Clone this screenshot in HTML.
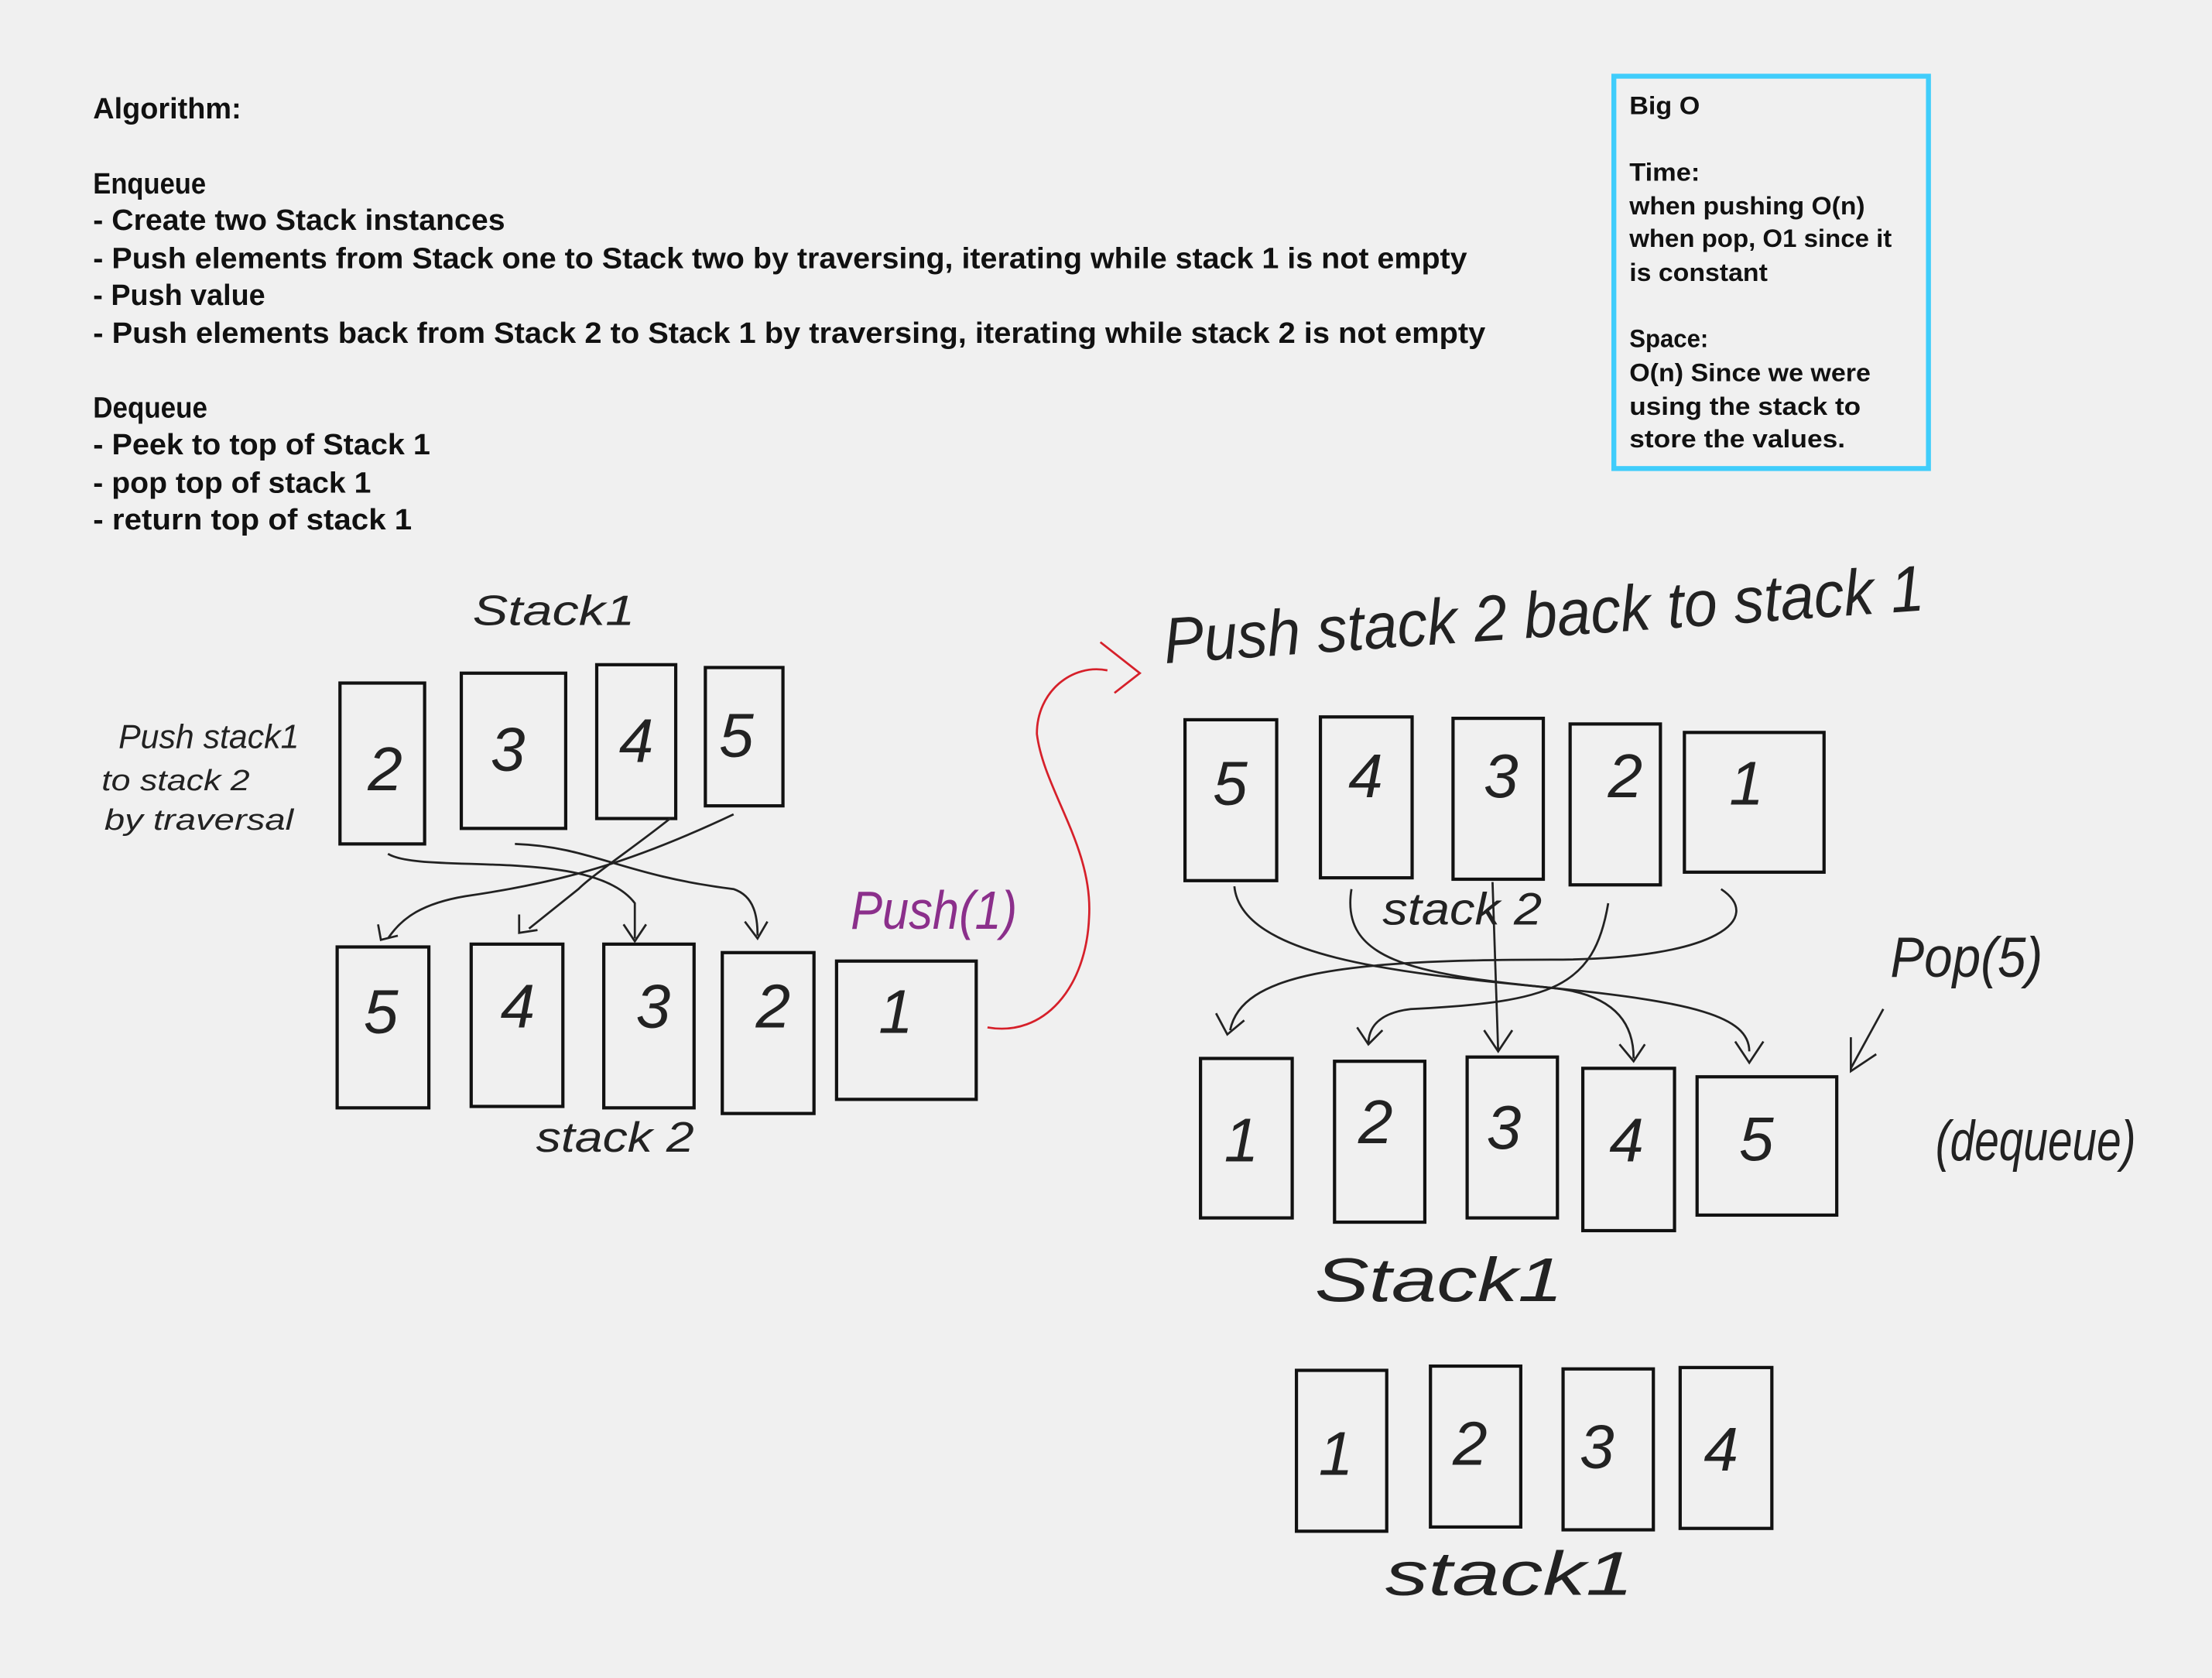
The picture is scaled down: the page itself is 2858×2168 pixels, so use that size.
<!DOCTYPE html>
<html><head><meta charset="utf-8"><style>
html,body{margin:0;padding:0;background:#f0f0f0;}
svg{display:block}
.t{font-family:"Liberation Sans",sans-serif;font-weight:bold;fill:#111;font-size:21px}
.h{font-family:"Liberation Sans",sans-serif;font-style:italic;fill:#222}
.b{fill:none;stroke:#111;stroke-width:2.3}
.l{fill:none;stroke:#222;stroke-width:1.5}
</style></head><body>
<svg width="2858" height="2168" viewBox="0 0 1568 1189" preserveAspectRatio="none" xmlns="http://www.w3.org/2000/svg">
<rect width="1568" height="1189" fill="#f0f0f0"/>
<g class="t" lengthAdjust="spacingAndGlyphs">
<text x="66" y="84" textLength="105" lengthAdjust="spacingAndGlyphs">Algorithm:</text>
<text x="66" y="137" textLength="80" lengthAdjust="spacingAndGlyphs">Enqueue</text>
<text x="66" y="163" textLength="292" lengthAdjust="spacingAndGlyphs">- Create two Stack instances</text>
<text x="66" y="190" textLength="974" lengthAdjust="spacingAndGlyphs">- Push elements from Stack one to Stack two by traversing, iterating while stack 1 is not empty</text>
<text x="66" y="216" textLength="122" lengthAdjust="spacingAndGlyphs">- Push value</text>
<text x="66" y="243" textLength="987" lengthAdjust="spacingAndGlyphs">- Push elements back from Stack 2 to Stack 1 by traversing, iterating while stack 2 is not empty</text>
<text x="66" y="296" textLength="81" lengthAdjust="spacingAndGlyphs">Dequeue</text>
<text x="66" y="322" textLength="239" lengthAdjust="spacingAndGlyphs">- Peek to top of Stack 1</text>
<text x="66" y="349" textLength="197" lengthAdjust="spacingAndGlyphs">- pop top of stack 1</text>
<text x="66" y="375" textLength="226" lengthAdjust="spacingAndGlyphs">- return top of stack 1</text>
</g>
<rect x="1144" y="54" width="223" height="278" fill="none" stroke="#40cdfb" stroke-width="3.5"/>
<g class="t" style="font-size:18px">
<text x="1155" y="81" textLength="50" lengthAdjust="spacingAndGlyphs">Big O</text>
<text x="1155" y="128" textLength="50" lengthAdjust="spacingAndGlyphs">Time:</text>
<text x="1155" y="152" textLength="167" lengthAdjust="spacingAndGlyphs">when pushing O(n)</text>
<text x="1155" y="175" textLength="186" lengthAdjust="spacingAndGlyphs">when pop, O1 since it</text>
<text x="1155" y="199" textLength="98" lengthAdjust="spacingAndGlyphs">is constant</text>
<text x="1155" y="246" textLength="56" lengthAdjust="spacingAndGlyphs">Space:</text>
<text x="1155" y="270" textLength="171" lengthAdjust="spacingAndGlyphs">O(n) Since we were</text>
<text x="1155" y="294" textLength="164" lengthAdjust="spacingAndGlyphs">using the stack to</text>
<text x="1155" y="317" textLength="153" lengthAdjust="spacingAndGlyphs">store the values.</text>
</g>
<g class="b">
<rect x="241" y="484" width="60" height="114"/><rect x="327" y="477" width="74" height="110"/><rect x="423" y="471" width="56" height="109"/><rect x="500" y="473" width="55" height="98"/>
<rect x="239" y="671" width="65" height="114"/><rect x="334" y="669" width="65" height="115"/><rect x="428" y="669" width="64" height="116"/><rect x="512" y="675" width="65" height="114"/><rect x="593" y="681" width="99" height="98"/>
<rect x="840" y="510" width="65" height="114"/><rect x="936" y="508" width="65" height="114"/><rect x="1030" y="509" width="64" height="114"/><rect x="1113" y="513" width="64" height="114"/><rect x="1194" y="519" width="99" height="99"/>
<rect x="851" y="750" width="65" height="113"/><rect x="946" y="752" width="64" height="114"/><rect x="1040" y="749" width="64" height="114"/><rect x="1122" y="757" width="65" height="115"/><rect x="1203" y="763" width="99" height="98"/>
<rect x="919" y="971" width="64" height="114"/><rect x="1014" y="968" width="64" height="114"/><rect x="1108" y="970" width="64" height="114"/><rect x="1191" y="969" width="65" height="114"/>
</g>
<g class="h" style="font-size:44px" text-anchor="middle">
<text x="273" y="560">2</text><text x="360" y="546">3</text><text x="451" y="540">4</text><text x="522" y="536">5</text>
<text x="270" y="732">5</text><text x="367" y="728">4</text><text x="463" y="728">3</text><text x="548" y="728">2</text><text x="635" y="732">1</text>
<text x="872" y="570">5</text><text x="968" y="565">4</text><text x="1064" y="565">3</text><text x="1152" y="565">2</text><text x="1238" y="570">1</text>
<text x="880" y="823">1</text><text x="975" y="810">2</text><text x="1066" y="814">3</text><text x="1153" y="823">4</text><text x="1245" y="822">5</text>
<text x="947" y="1045">1</text><text x="1042" y="1038">2</text><text x="1132" y="1040">3</text><text x="1220" y="1042">4</text>
</g>
<g class="h">
<text x="335" y="443" style="font-size:30px" textLength="115" lengthAdjust="spacingAndGlyphs">Stack1</text>
<text x="380" y="816" style="font-size:30px" textLength="112" lengthAdjust="spacingAndGlyphs">stack 2</text>
<text x="84" y="530" style="font-size:24px" textLength="128" lengthAdjust="spacingAndGlyphs">Push stack1</text>
<text x="72" y="560" style="font-size:21px" textLength="105" lengthAdjust="spacingAndGlyphs">to stack 2</text>
<text x="74" y="588" style="font-size:21px" textLength="134" lengthAdjust="spacingAndGlyphs">by traversal</text>
<text x="603" y="658" style="font-size:38px;fill:#8b2f8b" textLength="118" lengthAdjust="spacingAndGlyphs">Push(1)</text>
<text x="826" y="470" style="font-size:46px" transform="rotate(-4 826 470)" textLength="540" lengthAdjust="spacingAndGlyphs">Push stack 2 back to stack 1</text>
<text x="980" y="655" style="font-size:32px" textLength="113" lengthAdjust="spacingAndGlyphs">stack 2</text>
<text x="1340" y="692" style="font-size:40px" textLength="108" lengthAdjust="spacingAndGlyphs">Pop(5)</text>
<text x="1372" y="822" style="font-size:40px" textLength="142" lengthAdjust="spacingAndGlyphs">(dequeue)</text>
<text x="932" y="922" style="font-size:44px" textLength="176" lengthAdjust="spacingAndGlyphs">Stack1</text>
<text x="982" y="1130" style="font-size:44px" textLength="176" lengthAdjust="spacingAndGlyphs">stack1</text>
</g>
<g class="l">
<path d="M275 605 C300 620 420 600 450 640 L450 665"/><path d="M442 655 l8 12 l8 -12"/>
<path d="M365 598 C420 600 440 620 520 630 C535 635 537 650 537 663"/><path d="M528 653 l9 12 l7 -12"/>
<path d="M475 580 C450 600 420 620 410 630 L375 658"/><path d="M368 648 l0 13 l13 -2"/>
<path d="M520 577 C450 610 400 625 330 635 C300 640 285 650 275 665"/><path d="M268 655 l2 11 l12 -3"/>
<path d="M700 728 C740 735 770 700 772 650 C775 600 740 560 735 520 C735 490 760 470 785 475" stroke="#d6202a"/>
<path d="M780 455 l28 22 l-18 14" stroke="#d6202a"/>
<path d="M875 628 C880 680 1000 690 1100 700 C1200 710 1240 720 1240 745"/><path d="M1230 738 l10 15 l10 -15"/>
<path d="M958 630 C950 680 1000 690 1100 700 C1150 705 1158 730 1158 750"/><path d="M1148 740 l10 12 l8 -12"/>
<path d="M1058 625 L1062 745"/><path d="M1052 730 l10 15 l10 -15"/>
<path d="M1140 640 C1130 700 1100 710 1000 715 C975 718 970 730 970 740"/><path d="M962 728 l8 12 l10 -10"/>
<path d="M1220 630 C1250 650 1220 680 1100 680 C950 680 880 690 872 730"/><path d="M862 718 l8 15 l12 -10"/>
<path d="M1335 715 L1312 757"/><path d="M1312 735 l0 24 l18 -12"/>
</g>
</svg>
</body></html>
